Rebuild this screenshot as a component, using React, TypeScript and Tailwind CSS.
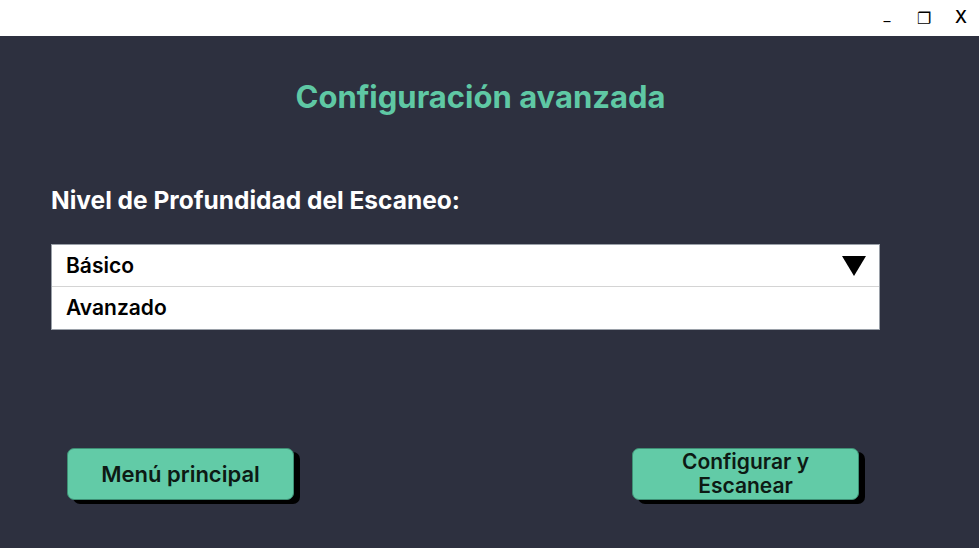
import React from "react";

export default function App() {
  const font = { fontFamily: "Inter, 'Noto Sans', sans-serif" };
  return (
    <div className="w-[979px] h-[548px] flex flex-col bg-[#2d303f] overflow-hidden" style={font}>
      <div className="h-[36px] bg-white flex justify-end items-center shrink-0">
        <div className="flex items-center h-full text-black">
          <span className="w-[36px] text-center text-[14px] mt-[4px]">–</span>
          <span className="w-[38px] text-center text-[16px]">❐</span>
          <span className="w-[36px] text-center text-[17px] font-medium">X</span>
        </div>
      </div>
      <div className="flex-1 flex flex-col pl-[51px] pr-[99px]">
        <h1 className="text-center text-[31px] leading-[38px] font-bold text-[#5fc8a4] mt-[42px] ml-[30px]">
          Configuración avanzada
        </h1>
        <div className="mt-[69px] text-[24.5px] leading-[30px] font-bold text-white">Nivel de Profundidad del Escaneo:</div>
        <div className="mt-[29px] bg-white border border-[#9aa0a8] flex flex-col">
          <div className="h-[42px] flex items-center justify-between pl-[14px] pr-[13px] border-b border-[#d4d4d4]">
            <span className="text-[21px] font-semibold text-black">Básico</span>
            <svg width="24" height="20" viewBox="0 0 24 20">
              <polygon points="0,0 24,0 12,20" fill="#000" />
            </svg>
          </div>
          <div className="h-[42px] flex items-center pl-[14px]">
            <span className="text-[21px] font-semibold text-black">Avanzado</span>
          </div>
        </div>
        <div className="mt-[118px] flex justify-between pl-[16px] pr-[21px]">
          <button className="w-[227px] h-[52px] rounded-[7px] bg-[#62cba7] border border-[#3e8f74] shadow-[6px_4px_0_#000] text-[22px] font-semibold text-[#0d1a14]">
            Menú principal
          </button>
          <button className="w-[227px] h-[52px] rounded-[7px] bg-[#62cba7] border border-[#3e8f74] shadow-[6px_4px_0_#000] text-[21px] leading-[24px] font-semibold text-[#0d1a14] flex flex-col items-center justify-center">
            <span>Configurar y</span>
            <span>Escanear</span>
          </button>
        </div>
      </div>
    </div>
  );
}
